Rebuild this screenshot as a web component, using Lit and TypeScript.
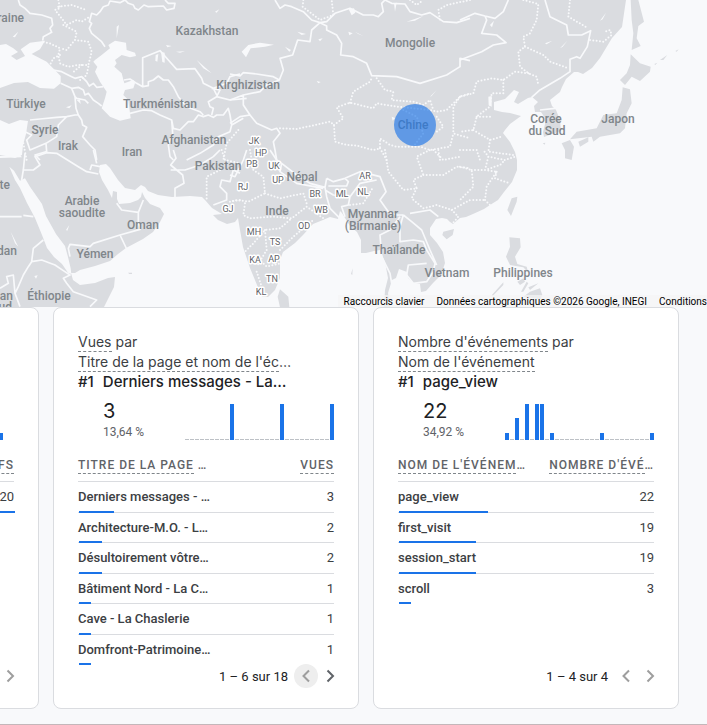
import { LitElement, html, svg, css, nothing } from "lit";
import { customElement, property } from "lit/decorators.js";
import { classMap } from "lit/directives/class-map.js";
import { styleMap } from "lit/directives/style-map.js";

interface Row { name: string; value: number; share: number }
interface CardData {
  metric: string;
  dimension: string;
  top: string;
  total: string;
  percent: string;
  bars: Record<number, number>;
  narrow?: boolean;
  headName: string;
  headValue: string;
  rows: Row[];
  range: string;
  hover?: boolean;
  hasNext?: boolean;
}

const CARDS: CardData[] = [
  {
    metric: "Utilisateurs actifs", dimension: "Ville", top: "", total: "20", percent: "100 %",
    bars: { 29: 7 }, narrow: true, headName: "VILLE", headValue: "ACTIFS",
    rows: [{ name: "", value: 20, share: 100 }], range: "1 – 1 sur 1",
  },
  {
    metric: "Vues", dimension: "Titre de la page et nom de l'éc…", top: "Derniers messages - La…",
    total: "3", percent: "13,64 %", bars: { 9: 36, 19: 36, 29: 36 },
    headName: "TITRE DE LA PAGE …", headValue: "VUES",
    rows: [
      { name: "Derniers messages - …", value: 3, share: 13.64 },
      { name: "Architecture-M.O. - L…", value: 2, share: 9.09 },
      { name: "Désultoirement vôtre…", value: 2, share: 9.09 },
      { name: "Bâtiment Nord - La C…", value: 1, share: 4.55 },
      { name: "Cave - La Chaslerie", value: 1, share: 4.55 },
      { name: "Domfront-Patrimoine…", value: 1, share: 4.55 },
    ],
    range: "1 – 6 sur 18", hover: true, hasNext: true,
  },
  {
    metric: "Nombre d'événements", dimension: "Nom de l'événement", top: "page_view",
    total: "22", percent: "34,92 %",
    bars: { 0: 7, 2: 22, 4: 36, 6: 36, 7: 36, 9: 7, 19: 7, 29: 7 },
    headName: "NOM DE L'ÉVÉNEM…", headValue: "NOMBRE D'ÉVÉ…",
    rows: [
      { name: "page_view", value: 22, share: 34.92 },
      { name: "first_visit", value: 19, share: 30.16 },
      { name: "session_start", value: 19, share: 30.16 },
      { name: "scroll", value: 3, share: 4.76 },
    ],
    range: "1 – 4 sur 4",
  },
];

// Continental coast, clockwise from the north-west corner.
const LAND = `M0 0H626L622 27 612 38 600 58 592 68 583 74 578 72 574 72 566 79 562 87 560 92 550 100 552 106 556 110 560 120 561 131
552 134 544 137 543 132 545 124 545 118 541 112 535 112 534 106 538 102 532 97 528 98 518 104 514 102 519 92 514 90 505 99 494 102 494 110
502 112 510 113 521 116 510 124 505 130 503 133 510 142 515 152 517 160 517 170 512 182 504 192 498 200 490 205 484 209 473 214 466 217
460 218 453 224 450 222 447 219 442 218 436 219 430 228 430 235 437 243 443 252 445 263 441 275 433 283 426 291 421 292 420 284 413 283
408 278 407 272 399 269 396 278 392 280 388 293 390 307 384 307 385 290 388 278 385 262 380 250 374 251 366 253 361 253 361 240 357 232
350 226 345 218 342 213 340 211 338 219 330 217 323 220 313 224 303 235 295 243 283 252 280 260 280 278 275 290 268 297 262 297 257 285
250 268 243 247 240 230 238 218 235 222 227 224 218 220 213 215 222 214 212 208 205 200 202 197 190 196 172 197 158 195 148 191 145 187
141 185 135 190 125 188 118 180 110 168 106 164 100 165 99 172 102 180 108 190 112 198 113 191 117 192 117 199 119 204 130 203 138 200
141 197 142 192 145 198 150 204 160 208 164 214 160 222 153 232 143 239 126 248 118 254 110 261 95 266 80 270 75 273 71 273 73 280 80 285
95 283 108 278 115 277 114 287 104 307 0 307Z`;

const ISLANDS: [number, number, string][] = [
  [460, 0, `M512 0H535L552 65 535 78 530 115 542 138 515 150 520 100 515 60Z
    M512 163 540 190 572 200 570 215 540 243 515 230 495 255 480 240 500 220 510 195Z
    M488 262 510 268 515 310 500 340 495 385 480 400 420 410 400 425 395 410 330 418 350 395 410 385 430 345 470 340 485 300Z
    M305 430 330 420 342 440 335 480 315 475 315 450Z M355 425 385 412 385 425 360 440Z M248 430 256 428 254 434Z
    M583 192 592 188 586 195Z M600 180 622 165 610 180Z M646 153 656 148 650 155Z`],
  [460, 150, `M318 0H338L335 20 320 25Z M172 140 170 155 153 198 142 180 155 145Z
    M148 262 180 265 182 292 165 320 172 342 200 350 205 368 190 352 150 345 138 320 150 290Z
    M172 395 190 385 195 395 180 405Z M183 425 200 395 205 400 190 425Z M205 412 235 400 210 420Z
    M190 440 210 425 240 415 247 435 240 450 225 445Z M130 397V405L98 438 95 436Z`],
  [230, 150, `M640 245 672 237 668 255 650 268 637 255Z M150 418 175 440 178 472H150L143 440Z M368 355 367 375 363 372Z`],
  [0, 150, `M384 368H396V372H388Z`],
];

const WATER: [number, number, string][] = [
  [0, 0, `M0 135 18 132 40 145 54 156 33 168 50 180 75 168 62 148 90 128 135 122 120 148 95 162 140 185 182 228 182 250 162 266 120 264 84 246 42 249 0 264Z
    M0 360 27 372 60 360 84 363 78 402 69 435 66 465 45 474 18 468 0 465Z
    M285 180 305 165 330 145 325 135 345 122 378 128 380 150 405 158 408 168 390 172 365 165 345 180 350 190 343 200 365 220 373 250 400 240 405 250 400 265 375 270 370 285 385 300 392 355 360 362 330 350 305 325 315 295 320 275 300 245 285 215 292 200 280 185Z
    M467 165 475 162 472 185 466 182Z M483 155 494 158 494 188 487 186Z M198 322 215 316 208 325Z M350 80 357 75 350 115Z
    M528 155 555 154 540 158Z M590 180 635 220 610 205Z M498 135 515 138 502 142Z M645 35 658 28 650 38Z M230 300 240 298 242 312Z M38 110 55 95 45 112Z`],
  [230, 0, `M35 155 55 135 90 128 132 134 105 140 62 145 48 172Z M165 140 183 150 178 155Z M202 95 228 102 215 105Z M265 118 278 115 270 124Z
    M530 65 580 48 555 62Z M356 28 372 25 376 38 365 46Z M492 10 500 8 495 35Z M355 95 368 100 358 106Z M375 95 400 108 385 102Z
    M600 290 620 270 605 288Z M485 350 495 354 488 362Z M260 243 272 246 265 250Z`],
  [460, 0, `M90 75 102 62 96 82Z M255 130 277 122 260 133Z M300 145 322 122 308 140Z M420 62 438 38 428 58Z M85 290 95 288 95 320 86 316Z`],
  [0, 150, `M28 50 42 62 60 92 75 85 90 110 126 162 138 198 168 252 195 288 204 321 212 355 214 372 204 368 186 342 162 321 141 294 126 255 105 204 81 159 60 114 45 90Z
    M103 378 113 376 108 386Z M198 240 208 225 202 242Z M32 245 55 290 45 280Z M0 18 60 14 66 22 0 24Z`],
];

const BORDERS: [number, number, string][] = [
  [0, 0, `M55 0 60 15 75 25 90 40 125 45 155 55 158 75 150 85 155 97 130 110 128 122
    M375 0 385 10 400 15 405 25 415 30 432 15 445 20 490 18 500 30 522 25 525 10 505 10 495 0
    M375 0 360 8 330 3 325 15 310 20 300 35 290 45 275 40 268 65 275 70 268 85 275 100 305 125 315 140
    M160 210 185 215 215 230 225 235 245 230 260 245 268 258 280 250 290 262 310 260
    M182 250 200 258 215 265 235 262 250 270 255 285 265 280 280 300 295 310 305 318
    M215 265 225 290 230 295 255 300 265 310 M90 360 120 357 170 352 200 350 225 345 235 345
    M225 290 228 325 235 345 245 360 248 375 260 382 248 410 270 435 285 450 290 480
    M200 350 175 375 170 410 138 430 90 450 80 420 95 405 75 395 M138 430 140 455 105 465 120 480
    M372 240 390 237 410 250 428 260 445 257 445 245 460 240 475 228 490 240 505 240 520 260 535 290 560 320 600 335 610 345
    M428 257V173L480 152 505 180 530 208 585 206 605 235 610 250 640 265 650 285
    M390 340 430 330 455 332 480 345 515 360 520 385 540 390 565 365 580 365 595 345 610 350 625 345 640 352 650 345 670 345 685 325 690 345 695 375 690 395 655 410 640 435 600 460 560 480
    M515 360 518 400 505 435 510 470 520 480 M635 265 660 270 650 290 625 305 630 320 640 325 635 345
    M650 290 690 300 740 295 M640 265 680 250 690 230 720 222 M695 375 730 355`],
  [230, 0, `M135 0 150 25 165 15 185 20 220 35 245 60 270 68 290 65 315 40 360 25 400 45 430 45 445 50 460 35 455 10 465 0
    M270 68 245 90 240 125 203 120 188 165 150 175 160 210 148 240 130 230 80 222 40 218 30 228 0 222
    M270 68 290 78 290 90 320 105 335 130 332 165 370 170 410 190 425 227 500 230 570 250 650 225 690 200 690 175 720 182
    M465 0 485 10 525 12 540 35 575 45 600 38 640 65 680 68 720 55
    M148 240 110 255 90 275 40 285 40 315 60 345 30 350 0 370 M0 300 40 285 M60 345 80 370 125 390 140 385 150 400 130 425 135 450 140 480`],
  [460, 0, `M0 60 45 40 75 48 105 55 130 35 145 0 M75 48 80 60 65 100 110 105 138 128 100 135 65 155 0 180
    M255 0 270 50 320 75 325 105 365 105 392 92 382 140 360 175 350 170 330 178 330 215 300 235 240 270 215 292 M240 330 285 325`],
  [0, 150, `M75 10 70 60 65 90 M70 60 100 60 120 45 105 20 140 8 170 10 235 50 260 65 295 72 M270 60 275 45 300 50 M280 0 290 40
    M350 160 365 180 415 187 430 150 M415 187 415 215 420 238 360 255 280 280 270 290 210 283 205 295 210 320 M360 255 380 297
    M0 200H65M70 196 100 200 M130 270 100 295 95 335 85 350 70 375 55 410 45 430 40 375 20 380 25 400 0 415
    M95 335 125 330 165 345 190 362 210 375 190 385 200 400 220 425 290 450 270 470 M45 430 60 470
    M520 0 528 25 512 45 548 75 552 100 525 115 525 143 M512 60 555 60 600 45 640 20 660 0
    M720 70 700 60 690 95 665 90 660 110 680 130 680 150 640 165`],
  [230, 150, `M0 75 15 80 40 30 50 0 M120 0 140 30 155 40 200 75 240 100 285 112 290 85 M155 40 150 65 200 100 280 115
    M290 85 310 95 345 85 355 95 350 108 295 108 M345 85 390 65 450 80 468 125 450 150 475 185 500 195 520 195
    M285 112 290 140 300 175 330 205 M285 120 310 135 360 140 355 165 335 170 345 200 M360 140 390 100 440 90
    M510 200 480 240 450 255 455 320 480 370 485 400 M520 195 510 230 510 275 550 270 580 275 590 300
    M520 195 545 215 575 240 600 300 620 345 M540 190 600 180 625 200 M590 340 535 345 530 375 550 400 590 395 610 365 615 340 590 300`],
];

const PROVINCES: [number, number, string][] = [
  [0, 0, `M175 0 180 25 165 30 185 55 200 75 230 60 245 65 270 50 M175 20 215 15 260 30 M190 75 230 95 225 120 265 125 275 155 265 195 235 195 205 200 180 190 175 165 180 145 150 130 125 125
    M225 120 200 150 180 145 M180 165 160 175 150 195 M245 195 215 220 M265 200 260 225 240 240 M70 430 80 480 M715 390 680 430 670 480`],
  [230, 0, `M150 385 200 387 300 365 312 375 315 425 350 435 380 437 430 450 450 445 450 415 480 435 500 440 570 440 600 450 660 440 670 400
    M312 375 340 355 320 322 360 308 430 325 440 310 500 320 600 330 620 335 650 330 690 290 720 280 M360 308 370 275 420 245 427 230
    M440 235 465 270 490 275 485 300 550 305 580 315 600 300 610 330 M620 350 640 380 620 395 M220 0 218 20 270 60 310 45 305 0 M540 0 560 15 580 0
    M720 0 650 15 625 30 630 60 M690 290 670 320 670 400 720 415 M520 330 560 350 580 400 550 440 M450 445 470 480 M625 450 630 480`],
  [460, 0, `M190 0 235 12 230 60 210 100 190 110 195 140 175 155 180 200 205 220 230 230 235 255 M195 140 250 165 270 185 325 205 M330 0 325 50 385 85
    M390 120 430 125 455 105 450 90 435 95 M205 220 165 215 130 240 95 235 50 245 40 280 0 290 M130 240 130 280 95 280 90 320 50 350 40 390 0 395
    M50 350 100 350 M40 390 90 420 125 410 M90 420 85 455 160 465 M0 450 50 450 60 480`],
  [0, 150, `M660 60 620 80 620 150 M690 155 720 150 M665 0 675 30 720 40`],
  [230, 150, `M60 0 70 60 100 80 105 130 55 155 20 150 0 155 M105 130 150 145 220 130 230 160 M45 160 40 195 60 205 130 200 185 205 230 170 280 205
    M40 310 70 280 105 240 150 235 185 205 M105 240 110 300 80 350 M150 300 190 260 250 210 M80 320 110 350 150 340 M80 365 95 410
    M465 0 475 65 520 120 560 115 550 90 580 75 560 20 600 0 M560 115 545 145 580 175 620 165 665 180 720 150
    M580 75 640 75 680 50 720 55 M610 0 640 30 690 20 M665 180 685 200 655 235 M360 165 400 160 430 110`],
  [460, 150, `M0 50 35 60 40 110 0 150 M35 60 75 60 85 20 70 0 M75 60 110 65 80 110 75 150 90 165 M110 65 105 85 150 100
    M85 20 135 30 165 20 M75 60 120 45 135 30 M40 150 75 150`],
];

const COUNTRIES: [number, number, string][] = [
  [207, 35, "Kazakhstan"], [410, 47, "Mongolie"], [248, 89, "Kirghizistan"], [26, 108, "Türkiye"],
  [160, 108, "Turkménistan"], [45, 134, "Syrie"], [68, 150, "Irak"], [132, 156, "Iran"],
  [194, 144, "Afghanistan"], [218, 170, "Pakistan"], [302, 181, "Népal"], [277, 215, "Inde"],
  [82, 205, "Arabie"], [82, 217, "saoudite"], [143, 229, "Oman"], [95, 258, "Yémen"],
  [49, 300, "Éthiopie"], [373, 218, "Myanmar"], [373, 230, "(Birmanie)"], [399, 254, "Thaïlande"],
  [447, 277, "Vietnam"], [523, 277, "Philippines"], [546, 123, "Corée"], [547, 135, "du Sud"],
  [618, 123, "Japon"], [413, 129, "Chine"],
];
// Names that run off the western edge are set flush to where they end.
const WESTERN: [number, number, string][] = [
  [24, 22, "Ukraine"], [10, 189, "Égypte"], [17, 255, "Soudan"], [13, 300, "Soudan"], [12, 311, "du Sud"],
];
const STATES: [number, number, string][] = [
  [254, 144, "JK"], [261, 156, "HP"], [252, 167, "PB"], [274, 169, "UK"], [278, 183, "UP"], [243, 190, "RJ"],
  [228, 212, "GJ"], [315, 197, "BR"], [342, 197, "ML"], [363, 195, "NL"], [365, 179, "AR"], [321, 213, "WB"],
  [304, 229, "OD"], [254, 235, "MH"], [275, 245, "TS"], [255, 263, "KA"], [274, 262, "AP"], [272, 282, "TN"], [261, 295, "KL"],
];

const tiles = (list: [number, number, string][], cls: string) =>
  list.map(([x, y, d]) => svg`<g transform="translate(${x} ${y}) scale(.33333)"><path class=${cls} d=${d}></path></g>`);
const names = (list: [number, number, string][], cls: string) =>
  list.map(([x, y, t]) => svg`<text class=${cls} x=${x} y=${y}>${t}</text>`);

@customElement("world-map")
export class WorldMap extends LitElement {
  static styles = css`
    :host { display: block; position: relative; overflow: hidden; background: #f8f9fb; font-family: Roboto, sans-serif; }
    .map { display: block; width: 100%; height: auto; }
    .land { fill: #dadce0; }
    .water { fill: #f8f9fb; }
    .border { fill: none; stroke: #f8f9fb; stroke-width: 5; stroke-linejoin: round; }
    .province { fill: none; stroke: #f8f9fb; stroke-width: 6; stroke-linecap: round; stroke-dasharray: 0 10; }
    .country, .western { fill: #80868b; font-size: 12px; font-weight: 500; text-anchor: middle; }
    .western { text-anchor: end; }
    .state { fill: #5f6368; font-size: 9px; text-anchor: middle; stroke: #fff; stroke-width: 3; paint-order: stroke; stroke-linejoin: round; }
    .bubble { fill: #1a73e8; fill-opacity: 0.64; }
    .credits { position: absolute; right: 0; bottom: 0; display: flex; font-size: 10px; line-height: 10px; color: #000; }
    .credit { margin: 0; padding: 2px 6px 0; border: 0; background: #f5f5f5b3; color: #000; font: inherit; text-decoration: none; white-space: nowrap; }
    .terms { padding-right: 0; }
  `;
  render() {
    return html`
      <svg class="map" viewBox="0 0 707 307" role="img" aria-label="Carte des utilisateurs actifs">
        <path class="land" d=${LAND}></path>
        ${tiles(ISLANDS, "land")}
        ${tiles(WATER, "water")}
        ${tiles(PROVINCES, "province")}
        ${tiles(BORDERS, "border")}
        ${names(COUNTRIES, "country")}
        ${names(WESTERN, "western")}
        ${names(STATES, "state")}
        <circle class="bubble" cx="415" cy="125" r="21"></circle>
      </svg>
      <div class="credits">
        <button class="credit">Raccourcis clavier</button>
        <span class="credit">Données cartographiques ©2026 Google, INEGI</span>
        <a class="credit terms" href="#">Conditions</a>
      </div>`;
  }
}

@customElement("report-card")
export class ReportCard extends LitElement {
  @property({ attribute: false }) data!: CardData;

  static styles = css`
    :host {
      display: flex; flex-direction: column; box-sizing: border-box; min-height: 402px; padding: 24px 24px 20px;
      background: #fff; border: 1px solid #dadce0; border-radius: 8px; font-family: Roboto, sans-serif; color: #3c4043;
    }
    .title { margin: 0; font: 400 14px/20px Inter, sans-serif; color: #3c4043; white-space: nowrap; }
    .dashed { display: inline-block; line-height: 18px; border-bottom: 1px dashed #80868b; }
    .top { display: flex; gap: 9px; height: 20px; font: 500 15px/20px Inter, sans-serif; color: #202124; white-space: nowrap; }
    .summary { display: flex; justify-content: space-between; align-items: flex-end; height: 48px; padding-left: 25px; }
    .total { font: 400 20px/26px Inter, sans-serif; color: #202124; }
    .percent { font-size: 12px; line-height: 16px; color: #5f6368; }
    .chart { display: grid; grid-template-columns: repeat(30, 4px); gap: 1px; height: 36px; align-items: end; }
    .narrow { padding-right: 11px; }
    .bar { height: 1px; background: #bdc1c6; }
    .on { background: #1a73e8; }
    table { width: 100%; margin: 12px 0 -2px; border-collapse: collapse; table-layout: fixed; }
    th { height: 27px; padding: 0 0 2px; border-bottom: 1px solid #dadce0; font-size: 12px; line-height: 16px; font-weight: 500;
      letter-spacing: 1px; color: #5f6368; text-align: left; white-space: nowrap; }
    th .dashed { line-height: 16px; }
    .num { text-align: right; font-weight: 400; }
    th.num { font-weight: 500; }
    .wide { width: 43%; }
    tbody tr { position: relative; }
    td { height: 29px; padding: 0; border-bottom: 1px solid #dadce0; font-size: 13px; line-height: 16px; font-weight: 500; white-space: nowrap; }
    tbody tr:nth-child(odd) td { height: 30px; }
    tbody tr:last-child td { border-color: transparent; }
    .share { position: absolute; left: 1px; bottom: 0; height: 2px; background: #1a73e8; }
    .pager { display: flex; align-items: center; justify-content: flex-end; height: 24px; margin-top: auto; font-size: 13px; color: #202124; }
    .range { margin-right: 6px; }
    .step { display: grid; place-items: center; width: 24px; height: 24px; padding: 0; border: 0; border-radius: 50%; background: none; color: #9e9e9e; }
    .step:last-child { margin-right: -8px; }
    .hover { background: #eee; }
    .ready { color: #5f6368; }
    .chevron { width: 24px; height: 24px; fill: none; stroke: currentColor; stroke-width: 2; }
  `;

  private head(text: string) {
    const cut = text.endsWith("…");
    return html`<span class="dashed">${cut ? text.slice(0, -1).trimEnd() : text}</span>${cut ? (text.endsWith(" …") ? " …" : "…") : nothing}`;
  }

  render() {
    const d = this.data;
    return html`
      <h2 class="title"><span class="dashed">${d.metric}</span> par<br />${this.head(d.dimension)}</h2>
      <div class="top"><span>#1</span><span>${d.top}</span></div>
      <div class="summary">
        <div><div class="total">${d.total}</div><div class="percent">${d.percent}</div></div>
        <div class=${classMap({ chart: true, narrow: !!d.narrow })}>
          ${Array.from({ length: 30 }, (_, i) => {
            const h = d.bars[i];
            return html`<div class=${classMap({ bar: true, on: !!h })} style=${h ? styleMap({ height: `${h}px` }) : nothing}></div>`;
          })}
        </div>
      </div>
      <table>
        <thead><tr><th>${this.head(d.headName)}</th><th class=${classMap({ num: true, wide: d.headValue.length > 6 })}>${this.head(d.headValue)}</th></tr></thead>
        <tbody>
          ${d.rows.map((r) => html`<tr>
            <td>${r.name}<div class="share" style=${styleMap({ width: `${r.share}%` })}></div></td>
            <td class="num">${r.value}</td>
          </tr>`)}
        </tbody>
      </table>
      <div class="pager">
        <span class="range">${d.range}</span>
        <button class=${classMap({ step: true, hover: !!d.hover })} aria-label="Page précédente">
          <svg class="chevron" viewBox="0 0 24 24"><path d="M15 6.500l-5.500 5.500 5.500 5.500"></path></svg>
        </button>
        <button class=${classMap({ step: true, ready: !!d.hasNext })} aria-label="Page suivante">
          <svg class="chevron" viewBox="0 0 24 24"><path d="M9.500 6.500l5.500 5.500-5.500 5.500"></path></svg>
        </button>
      </div>`;
  }
}

@customElement("app-root")
export class AppRoot extends LitElement {
  static styles = css`
    :host { display: block; overflow: hidden; background: #f8f9fb; border-bottom: 1px solid #c4b7ba; }
    .cards { display: flex; justify-content: flex-end; align-items: stretch; gap: 14px; padding: 0 28px 15px 0; }
    .card { flex: 0 0 306px; }
  `;
  render() {
    return html`
      <world-map></world-map>
      <div class="cards">${CARDS.map((c) => html`<report-card class="card" .data=${c}></report-card>`)}</div>`;
  }
}
